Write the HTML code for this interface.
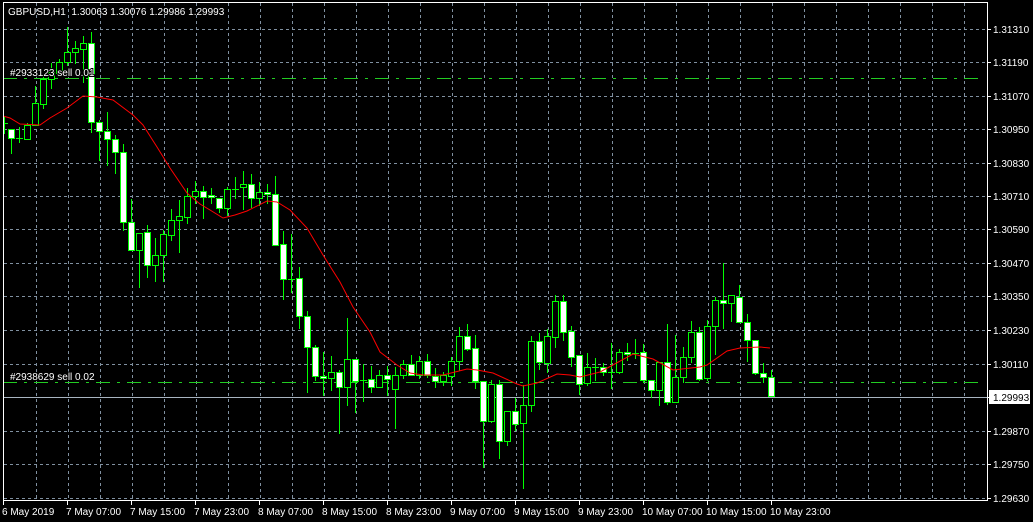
<!DOCTYPE html>
<html><head><meta charset="utf-8">
<style>
html,body{margin:0;padding:0;background:#000;width:1033px;height:522px;overflow:hidden}
svg{display:block}
text{font-family:"Liberation Sans",sans-serif;font-size:10px;fill:#fff;white-space:pre}
</style></head>
<body>
<svg id="c" width="1033" height="522" xmlns="http://www.w3.org/2000/svg">
<rect width="1033" height="522" fill="#000"/>
<g id="grid" stroke="#8090a0" stroke-width="1" stroke-dasharray="3,3" shape-rendering="crispEdges"></g>
<line x1="3" y1="78.5" x2="978" y2="78.5" stroke="#22cc22" stroke-dasharray="14,7,3,7" shape-rendering="crispEdges"/>
<line x1="3" y1="382.5" x2="980" y2="382.5" stroke="#22cc22" stroke-dasharray="14,7,3,7" shape-rendering="crispEdges"/>
<line x1="3" y1="397.5" x2="987" y2="397.5" stroke="#a8b4c0" shape-rendering="crispEdges"/>
<g id="candles" shape-rendering="crispEdges"></g>
<polyline id="ma" fill="none" stroke="#ff0000" stroke-width="1"/>
<g stroke="#fff" shape-rendering="crispEdges">
<line x1="3.5" y1="2" x2="3.5" y2="501"/>
<line x1="3" y1="2.5" x2="988" y2="2.5"/>
<line x1="987.5" y1="2" x2="987.5" y2="501"/>
<line x1="3" y1="500.5" x2="988" y2="500.5"/>
</g>
<g id="ticks" stroke="#fff" shape-rendering="crispEdges"></g>
<text x="8" y="15">GBPUSD,H1&#160;&#160;1.30063 1.30076 1.29986 1.29993</text>
<text x="10" y="76" stroke="#000" stroke-width="2" paint-order="stroke">#2933123 sell 0.01</text>
<text x="10" y="380" stroke="#000" stroke-width="2" paint-order="stroke">#2938629 sell 0.02</text>
<g id="ylab"></g>
<rect x="989" y="390" width="41" height="14" fill="#fff"/>
<text x="993" y="401" style="fill:#000">1.29993</text>
<g id="xlab"></g>
</svg>
<script>
var NS="http://www.w3.org/2000/svg";
function el(p,t,a,txt){var e=document.createElementNS(NS,t);for(var k in a)e.setAttribute(k,a[k]);if(txt)e.textContent=txt;document.getElementById(p).appendChild(e);return e;}
var hy=[29,62,96,129,163,196,229,263,296,330,364,397,431,464,498];
var hl=["1.31310","1.31190","1.31070","1.30950","1.30830","1.30710","1.30590","1.30470","1.30350","1.30230","1.30110","","1.29870","1.29750","1.29630"];
hy.forEach(function(y,i){el("grid","line",{x1:4,y1:y+.5,x2:987,y2:y+.5});
 el("ticks","line",{x1:987,y1:y+.5,x2:991,y2:y+.5});
 if(hl[i])el("ylab","text",{x:993,y:y+4},hl[i]);});
for(var x=36;x<=964;x+=32)el("grid","line",{x1:x+.5,y1:3,x2:x+.5,y2:500});
var xl=["6 May 2019","7 May 07:00","7 May 15:00","7 May 23:00","8 May 07:00","8 May 15:00","8 May 23:00","9 May 07:00","9 May 15:00","9 May 23:00","10 May 07:00","10 May 15:00","10 May 23:00"];
xl.forEach(function(t,i){var x=3+64*i;el("xlab","text",{x:x-1,y:515},t);el("ticks","line",{x1:x+.5,y1:501,x2:x+.5,y2:505});});
var d=[
["w",129,138,129,153],["d",138,138,127,142],["b",125,139,123,139],["b",103,125,86,125],["b",79,104,77,108],["b",72,79,63,88],["b",62,73,59,73],["b",52,62,27,65],["b",48,52,41,63],["b",43,49,36,82],
["w",43,122,32,132],["w",122,131,120,160],["w",131,139,112,165],["w",139,152,135,173],["w",152,222,144,230],["w",222,250,199,250],["b",233,250,233,287],["w",232,265,225,277],["b",255,265,238,281],["b",234,255,230,281],
["b",220,235,209,240],["b",216,220,200,252],["b",196,217,188,223],["b",191,196,181,203],["w",191,197,186,218],["w",195,197,188,203],["w",198,208,198,212],["b",189,208,187,215],["d",189,189,177,198],["b",184,187,171,209],
["w",184,198,174,207],["b",192,198,182,205],["w",192,194,184,203],["w",194,245,176,245],["w",244,279,231,299],["d",279,279,234,292],["w",278,316,267,328],["w",316,347,311,392],["w",347,376,345,380],["w",376,378,352,395],
["b",372,378,356,390],["w",372,387,370,433],["b",359,387,318,405],["w",359,381,359,412],["d",380,380,364,401],["w",379,387,366,392],["b",375,387,370,387],["w",375,379,366,395],["b",375,389,367,428],["b",364,375,360,378],
["w",364,375,355,375],["b",361,375,356,378],["w",361,375,354,377],["w",376,381,368,387],["b",375,381,372,385],["b",361,376,357,385],["b",336,361,327,370],["w",336,349,324,350],["w",348,381,335,388],["w",381,421,381,467],
["b",384,421,380,422],["w",384,441,380,458],["b",411,441,411,445],["w",411,424,398,430],["b",405,423,385,488],["b",341,405,336,411],["w",341,362,333,369],["b",336,363,329,372],["b",301,337,295,347],["w",301,332,295,340],
["w",331,357,326,366],["w",355,384,355,394],["b",367,383,353,385],["d",367,367,358,380],["w",367,372,363,375],["d",372,372,343,388],["b",352,372,349,373],["w",352,354,343,360],["d",353,353,339,358],["w",352,380,344,382],
["w",380,390,380,397],["b",362,390,362,405],["w",362,402,324,404],["b",377,402,335,402],["b",357,377,347,382],["b",332,357,321,362],["w",332,379,327,380],["b",326,378,320,380],["b",300,326,297,354],["w",300,303,263,328],
["b",295,303,295,321],["w",297,322,285,322],["w",322,340,314,361],["w",340,373,340,374],["w",373,377,363,382],["w",377,396,370,396]];
el("candles","line",{x1:4.5,y1:117,x2:4.5,y2:134,stroke:"#00ff00"});
el("candles","line",{x1:4,y1:123.5,x2:8,y2:123.5,stroke:"#00ff00"});
d.forEach(function(c,i){var x=11+8*i;
 el("candles","line",{x1:x+.5,y1:c[3],x2:x+.5,y2:c[4]+1,stroke:"#00ff00"});
 if(c[0]=="d"||c[2]-c[1]<2){el("candles","line",{x1:x-3,y1:c[1]+.5,x2:x+4,y2:c[1]+.5,stroke:"#00ff00"});}
 else el("candles","rect",{x:x-2.5,y:c[1]+.5,width:6,height:c[2]-c[1],fill:c[0]=="w"?"#fff":"#000",stroke:"#00ff00"});
});
document.getElementById("ma").setAttribute("points","3,116 10,118 20,124 40,125 50,118 67,108 83,96 97,97 113,100 133,115 143,125 157,147 170,168 187,193 200,204 210,210 223,218 235,215 247,211 267,201 277,202 290,210 307,228 323,255 340,282 353,307 370,332 380,352 397,365 410,373 423,375 443,375 467,369 477,370 493,373 517,384 523,386 537,383 557,374 570,375 580,377 600,372 633,354 653,359 673,370 700,367 707,365 727,351 740,348 760,347 770,348");
</script>
</body></html>
